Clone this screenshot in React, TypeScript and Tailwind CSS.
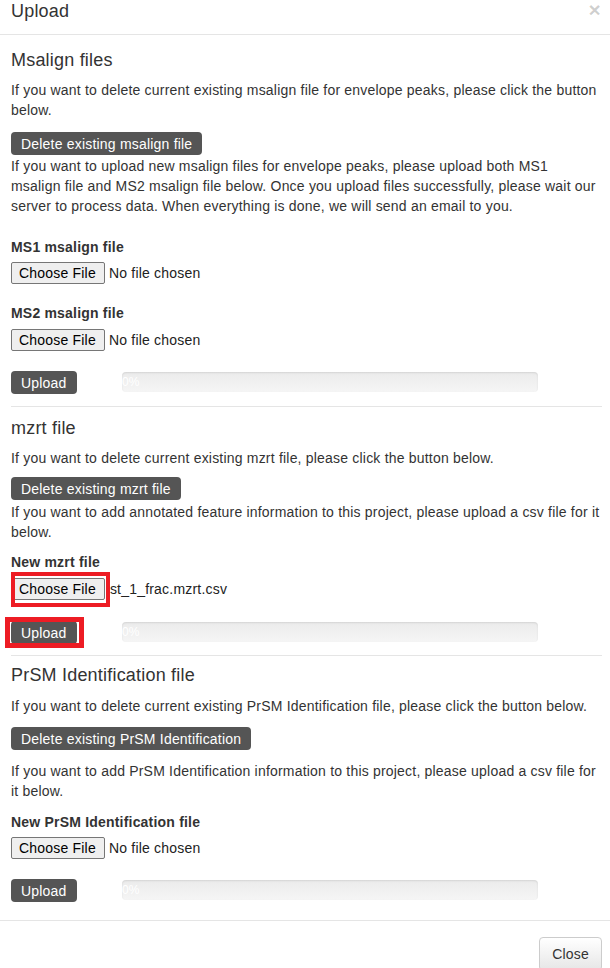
import React from "react";

const DarkBtn = ({ children, className = "" }: { children: React.ReactNode; className?: string }) => (
  <span
    className={
      "inline-flex items-center h-[23px] px-[10px] rounded-[4px] bg-[#555555] text-white text-[14px] leading-[20px] " +
      className
    }
  >
    {children}
  </span>
);

const FileInput = ({ name = "No file chosen" }: { name?: string }) => (
  <div className="flex items-center h-[22px]">
    <span className="inline-flex items-center h-[22px] pl-[7px] pr-[8px] border border-[#767676] rounded-[2px] bg-[#efefef] text-black text-[14px]">
      Choose File
    </span>
    <span className="ml-[4px] text-[#222]">{name}</span>
  </div>
);

const UploadRow = ({ highlight = false }: { highlight?: boolean }) => (
  <div className="flex items-start">
    <div className="w-[111px] relative">
      <div className="relative inline-block">
        <DarkBtn>Upload</DarkBtn>
        {highlight && (
          <span className="absolute left-[-6px] top-[-4px] w-[79px] h-[31px] border-[5px] border-[#ed1c24]" />
        )}
      </div>
    </div>
    <div className="mt-[1px] w-[416px] h-[20px] rounded-[4px] bg-gradient-to-b from-[#ebebeb] to-[#f5f5f5] shadow-[inset_0_1px_2px_rgba(0,0,0,0.1)] overflow-hidden">
      <div className="h-full w-0 text-white text-[12px] leading-[20px] whitespace-nowrap">0%</div>
    </div>
  </div>
);

export default function App() {
  return (
    <div className="w-[610px] h-[968px] bg-white overflow-hidden text-[14px] leading-[20px] tracking-[0.2px] text-[#333] font-['Liberation_Sans',Arial,sans-serif]">
      {/* header */}
      <div className="h-[35px] border-b border-[#e5e5e5] flex justify-between pl-[11px] pr-[9px]">
        <div className="text-[18px] leading-[20px] pt-[1px]">Upload</div>
        <div className="text-[21px] font-bold leading-[18px] text-black/20 mt-[1px]">×</div>
      </div>

      {/* body */}
      <div className="pl-[11px] pr-[8px]">
        {/* Msalign */}
        <div className="mt-[15px] text-[18px] leading-[20px]">Msalign files</div>
        <p className="mt-[10px]">
          If you want to delete current existing msalign file for envelope peaks, please click the button below.
        </p>
        <div className="mt-[12px]">
          <DarkBtn>Delete existing msalign file</DarkBtn>
        </div>
        <p className="mt-[1px]">
          If you want to upload new msalign files for envelope peaks, please upload both MS1
          <br />
          msalign file and MS2 msalign file below. Once you upload files successfully, please wait our server to
          process data. When everything is done, we will send an email to you.
        </p>
        <div className="mt-[21px] font-bold">MS1 msalign file</div>
        <div className="mt-[5px]">
          <FileInput />
        </div>
        <div className="mt-[19px] font-bold">MS2 msalign file</div>
        <div className="mt-[6px]">
          <FileInput />
        </div>
        <div className="mt-[20px]">
          <UploadRow />
        </div>
        <div className="mt-[12px] border-t border-[#e5e5e5]" />

        {/* mzrt */}
        <div className="mt-[11px] text-[18px] leading-[20px]">mzrt file</div>
        <p className="mt-[10px]">If you want to delete current existing mzrt file, please click the button below.</p>
        <div className="mt-[9px]">
          <DarkBtn>Delete existing mzrt file</DarkBtn>
        </div>
        <p className="mt-[2px]">
          If you want to add annotated feature information to this project, please upload a csv file for it below.
        </p>
        <div className="mt-[10px] font-bold">New mzrt file</div>
        <div className="mt-[6px] relative">
          <div className="flex items-center h-[22px]">
            <span className="inline-flex items-center h-[22px] pl-[7px] pr-[8px] border border-[#767676] rounded-[2px] bg-[#efefef] text-black text-[14px]">
              Choose File
            </span>
            <span className="ml-[5px] text-[#222]">st_1_frac.mzrt.csv</span>
          </div>
          <span className="absolute left-0 top-[-6px] w-[99px] h-[35px] border-[4px] border-[#ed1c24]" />
        </div>
        <div className="mt-[21px]">
          <UploadRow highlight />
        </div>
        <div className="mt-[11px] border-t border-[#e5e5e5]" />

        {/* PrSM */}
        <div className="mt-[9px] text-[18px] leading-[20px]">PrSM Identification file</div>
        <p className="mt-[11px]">
          If you want to delete current existing PrSM Identification file, please click the button below.
        </p>
        <div className="mt-[11px]">
          <DarkBtn>Delete existing PrSM Identification</DarkBtn>
        </div>
        <p className="mt-[11px]">
          If you want to add PrSM Identification information to this project, please upload a csv file for it below.
        </p>
        <div className="mt-[11px] font-bold">New PrSM Identification file</div>
        <div className="mt-[5px]">
          <FileInput />
        </div>
        <div className="mt-[20px]">
          <UploadRow />
        </div>
      </div>

      {/* footer */}
      <div className="mt-[18px] border-t border-[#e5e5e5] flex justify-end pr-[8px] pt-[16px]">
        <span className="inline-flex items-center h-[34px] px-[12px] rounded-[4px] border border-[#cccccc] bg-gradient-to-b from-white to-[#e6e6e6] text-[#333] text-[14px]">
          Close
        </span>
      </div>
    </div>
  );
}
